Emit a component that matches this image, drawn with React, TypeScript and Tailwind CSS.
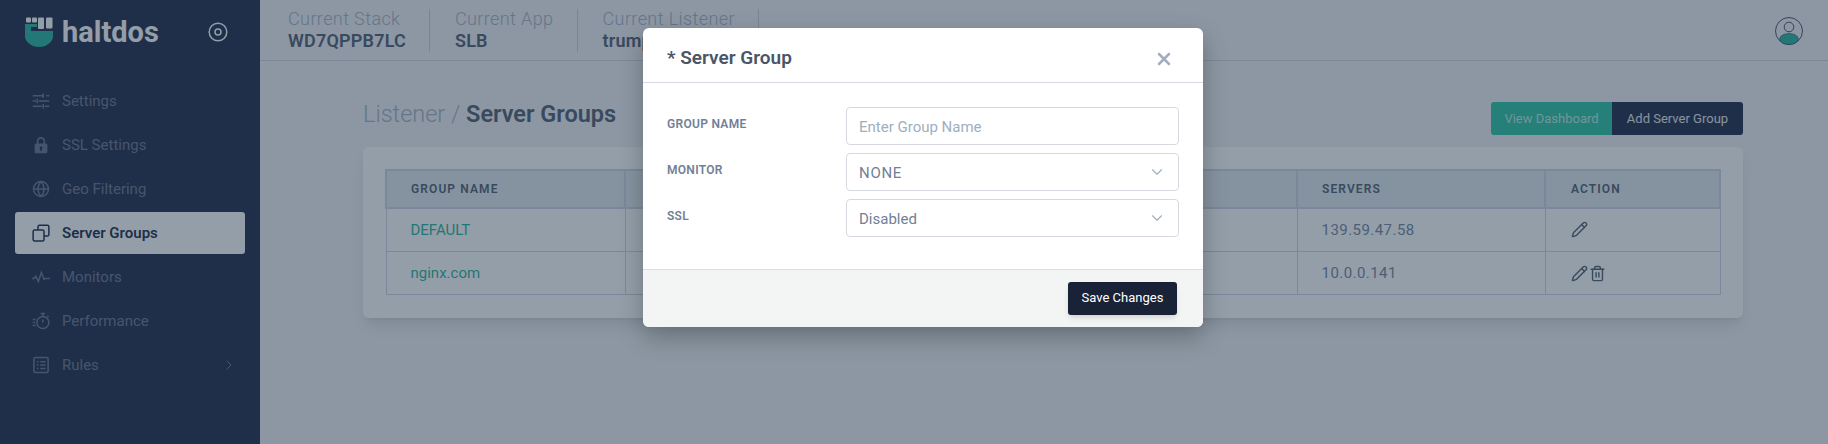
import { ChevronDown, ChevronRight, Globe, Pencil, Trash2, X } from "lucide-react";

type IconProps = { className?: string };

function SettingsIcon({ className }: IconProps) {
  return (
    <svg viewBox="0 0 24 24" className={className} fill="none" stroke="currentColor" strokeWidth="2">
      <path d="M1 5h14M19 5h4M15 2v6M1 12h4M9 12h14M7 9v6M1 19h12M17 19h6M15 16v6" />
    </svg>
  );
}

function LockIcon({ className }: IconProps) {
  return (
    <svg viewBox="0 0 24 24" className={className}>
      <path d="M7.500 11V7a4.500 4.500 0 0 1 9 0v4" fill="none" stroke="currentColor" strokeWidth="2.200" />
      <path
        fillRule="evenodd"
        fill="currentColor"
        d="M5.500 10h13a2 2 0 0 1 2 2v9a2 2 0 0 1-2 2h-13a2 2 0 0 1-2-2v-9a2 2 0 0 1 2-2zM12 14a2 2 0 0 0-1 3.700V20h2v-2.300A2 2 0 0 0 12 14z"
      />
    </svg>
  );
}

function GroupsIcon({ className }: IconProps) {
  return (
    <svg viewBox="0 0 24 24" className={className} fill="none" stroke="currentColor" strokeWidth="2">
      <rect x="1.500" y="8" width="14.500" height="14.500" rx="2" />
      <path d="M8 8V3.500a2 2 0 0 1 2-2h10.500a2 2 0 0 1 2 2V14a2 2 0 0 1-2 2H16" />
    </svg>
  );
}

function MonitorsIcon({ className }: IconProps) {
  return (
    <svg viewBox="0 0 24 24" className={className} fill="none" stroke="currentColor" strokeWidth="2">
      <path d="M0 14h3l2-3 3.500 7 4-12 3.500 9 2-1h6" />
    </svg>
  );
}

function PerformanceIcon({ className }: IconProps) {
  return (
    <svg viewBox="0 0 24 24" className={className} fill="none" stroke="currentColor" strokeWidth="2">
      <circle cx="14.500" cy="14" r="8" />
      <path d="M11.500 2h6M14.500 2v4M14.500 10v4M20.500 5l1.500 1.500M1 10h4M1 14h3M1 18h4" />
    </svg>
  );
}

function RulesIcon({ className }: IconProps) {
  return (
    <svg viewBox="0 0 24 24" className={className} fill="none" stroke="currentColor" strokeWidth="2">
      <rect x="2.500" y="2" width="19" height="20" rx="2" />
      <path d="M6.500 7.500h2M11 7.500h7M6.500 12h2M11 12h7M6.500 16.500h2M11 16.500h7" />
    </svg>
  );
}

const navItems = [
  { label: "Settings", icon: SettingsIcon },
  { label: "SSL Settings", icon: LockIcon },
  { label: "Geo Filtering", icon: Globe },
  { label: "Server Groups", icon: GroupsIcon, active: true },
  { label: "Monitors", icon: MonitorsIcon },
  { label: "Performance", icon: PerformanceIcon },
  { label: "Rules", icon: RulesIcon, more: true },
];

function Logo() {
  return (
    <svg viewBox="0 0 28 30" className="w-[28px] h-[30px] shrink-0">
      <rect x="1" y="0.500" width="5" height="5" rx="1" fill="#fff" />
      <rect x="7" y="0.500" width="5" height="5" rx="1" fill="#fff" />
      <rect x="13" y="0.500" width="6" height="11.500" rx="1" fill="#fff" />
      <rect x="21" y="0.500" width="6.500" height="11" rx="1" fill="#fff" />
      <path d="M0 7h12v3H6v4h22v5c0 6-6.500 11-14 11S0 25 0 19z" fill="#1fb39a" />
    </svg>
  );
}

function Avatar() {
  return (
    <svg viewBox="0 0 28 28" className="w-[28px] h-[28px]" fill="none">
      <circle cx="14" cy="14" r="13.500" stroke="#17203f" strokeWidth="0.800" />
      <circle cx="14" cy="10" r="4.800" stroke="#17203f" strokeWidth="0.800" />
      <ellipse cx="14" cy="22" rx="9.300" ry="5.500" fill="#1fb29b" stroke="#17203f" strokeWidth="0.500" />
    </svg>
  );
}

function Sidebar() {
  return (
    <aside className="w-[260px] shrink-0 bg-[#17203f] pt-[17px]">
      <div className="flex items-center pl-[25px] h-[30px]">
        <Logo />
        <span className="ml-[9px] w-[115px] text-[29px] font-bold text-white leading-none">haltdos</span>
        <svg viewBox="0 0 20 20" className="w-[20px] h-[20px] ml-[31px]" fill="none" stroke="#fff" strokeWidth="1.500">
          <circle cx="10" cy="10" r="8.800" />
          <circle cx="10" cy="10" r="3" />
        </svg>
      </div>
      <nav className="mt-[33px] px-[15px] flex flex-col gap-[2px]">
        {navItems.map((item) => {
          const Icon = item.icon;
          return (
            <a
              key={item.label}
              className={
                item.active
                  ? "h-[42px] flex items-center pl-[17px] pr-[8px] rounded-[3px] bg-white text-[#17203f] font-semibold text-[15px]"
                  : "h-[42px] flex items-center pl-[17px] pr-[8px] text-[#656d88] text-[15px]"
              }
            >
              <Icon className="w-[18px] h-[18px] mr-[12px]" />
              <span>{item.label}</span>
              {item.more && <ChevronRight className="w-[16px] h-[16px] ml-auto" strokeWidth={1.500} />}
            </a>
          );
        })}
      </nav>
    </aside>
  );
}

function HeaderStat({ label, value }: { label: string; value: string }) {
  return (
    <div className="h-[43px] pl-[25px] pr-[23px] border-r border-[#c7ced9] first:pl-[28px] flex flex-col justify-between">
      <div className="text-[18px] leading-[20px] font-light tracking-[0.4px] text-[#a0aec0]">{label}</div>
      <div className="text-[18px] leading-[22px] font-semibold tracking-[0.2px] text-[#4a5568]">{value}</div>
    </div>
  );
}

function ServerGroupModal() {
  return (
    <div className="absolute inset-0 bg-[#273e54]/50">
      <div className="absolute left-[643px] top-[28px] w-[560px] bg-white rounded-[6px] shadow-[0_10px_25px_rgba(0,0,0,0.25)] overflow-hidden">
        <div className="h-[55px] border-b border-[#d6d9e2] flex items-center justify-between pl-[24px] pr-[29px]">
          <h3 className="text-[19px] font-semibold text-[#4a5568] mt-[7px]">* Server Group</h3>
          <X className="w-[20px] h-[20px] text-[#a0aec0] mt-[7px]" strokeWidth={3} />
        </div>
        <div className="h-[186px] pl-[24px] pr-[24px] pt-[24px] flex flex-col gap-[8px]">
          <div className="flex items-start">
            <label className="w-[179px] text-[12px] font-semibold text-[#718096] tracking-[0.3px] mt-[8px]">GROUP NAME</label>
            <input
              placeholder="Enter Group Name"
              className="w-[333px] h-[38px] rounded-[4px] border border-[#d5d9df] px-[12px] pt-[2px] text-[15px] placeholder:text-[#a0aec0] outline-none"
            />
          </div>
          <div className="flex items-start">
            <label className="w-[179px] text-[12px] font-semibold text-[#718096] tracking-[0.3px] mt-[8px]">MONITOR</label>
            <div className="w-[333px] h-[38px] rounded-[4px] border border-[#d5d9df] pl-[12px] pr-[12px] flex items-center justify-between text-[15px] text-[#718096]">
              <span className="pt-[2px] tracking-[0.7px]">NONE</span>
              <ChevronDown className="w-[18px] h-[18px] text-[#a0aec0]" strokeWidth={1.500} />
            </div>
          </div>
          <div className="flex items-start">
            <label className="w-[179px] text-[12px] font-semibold text-[#718096] tracking-[0.3px] mt-[8px]">SSL</label>
            <div className="w-[333px] h-[38px] rounded-[4px] border border-[#d5d9df] pl-[12px] pr-[12px] flex items-center justify-between text-[15px] text-[#718096]">
              <span className="pt-[2px]">Disabled</span>
              <ChevronDown className="w-[18px] h-[18px] text-[#a0aec0]" strokeWidth={1.500} />
            </div>
          </div>
        </div>
        <div className="h-[58px] bg-[#f3f5f5] border-t border-[#dcdfe3] flex items-center justify-end pr-[26px]">
          <button className="h-[33px] w-[109px] pb-[2px] rounded-[3px] bg-[#1a2238] text-white text-[13px] shadow-md">Save Changes</button>
        </div>
      </div>
    </div>
  );
}

export default function App() {
  return (
    <div className="relative w-[1828px] h-[444px] overflow-hidden flex bg-[#f1f0f2] font-['Roboto',sans-serif]">
      <Sidebar />
      <div className="flex-1 flex flex-col">
        <header className="h-[61px] border-b border-[#cfd5df] flex items-start pt-[9px] pr-[25px]">
          <HeaderStat label="Current Stack" value="WD7QPPB7LC" />
          <HeaderStat label="Current App" value="SLB" />
          <HeaderStat label="Current Listener" value="trump.com" />
          <div className="ml-auto mt-[8px]">
            <Avatar />
          </div>
        </header>

        <main className="pl-[103px] pr-[85px]">
          <div className="flex items-center justify-between mt-[41px] h-[33px]">
            <h2 className="text-[23.500px] font-light text-[#a0aec0] mb-[7px]">
              Listener / <span className="font-semibold text-[#4a5568]">Server Groups</span>
            </h2>
            <div className="flex">
              <button className="h-[33px] w-[121px] rounded-l-[3px] bg-[#21c29c] text-white/70 text-[13px]">View Dashboard</button>
              <button className="h-[33px] w-[131px] rounded-r-[3px] bg-[#17203f] text-white/90 text-[13px]">Add Server Group</button>
            </div>
          </div>

          <div className="mt-[12px] bg-white rounded-[6px] shadow-lg px-[22px] pt-[22px] pb-[23px]">
            <table className="w-full table-fixed border-collapse text-[15px] text-[#718096]">
              <colgroup>
                <col className="w-[239px]" />
                <col />
                <col className="w-[248px]" />
                <col className="w-[175px]" />
              </colgroup>
              <thead>
                <tr className="h-[38px] bg-[#e3e8ec] text-left text-[12px] tracking-[1.100px] text-[#4a5568]">
                  <th className="border-2 border-[#cdd2de] pl-[24px] font-semibold">GROUP NAME</th>
                  <th className="border-2 border-[#cdd2de]"></th>
                  <th className="border-2 border-[#cdd2de] pl-[24px] font-semibold">SERVERS</th>
                  <th className="border-2 border-[#cdd2de] pl-[25px] font-semibold">ACTION</th>
                </tr>
              </thead>
              <tbody>
                <tr className="h-[43px]">
                  <td className="border border-[#cdd2de] pl-[24px] text-[#1fae92]">DEFAULT</td>
                  <td className="border border-[#cdd2de]"></td>
                  <td className="border border-[#cdd2de] pl-[24px] tracking-[0.45px]">139.59.47.58</td>
                  <td className="border border-[#cdd2de] pl-[25px] text-[#4a5568]">
                    <Pencil className="w-[17px] h-[17px]" strokeWidth={2} />
                  </td>
                </tr>
                <tr className="h-[43px]">
                  <td className="border border-[#cdd2de] pl-[24px] pt-[2px] text-[#1fae92]">nginx.com</td>
                  <td className="border border-[#cdd2de]"></td>
                  <td className="border border-[#cdd2de] pl-[24px] pt-[2px] tracking-[0.45px]">10.0.0.141</td>
                  <td className="border border-[#cdd2de] pl-[25px] pt-[2px] text-[#4a5568]">
                    <div className="flex gap-[1px]">
                      <Pencil className="w-[17px] h-[17px]" strokeWidth={2} />
                      <Trash2 className="w-[17px] h-[17px]" strokeWidth={2} />
                    </div>
                  </td>
                </tr>
              </tbody>
            </table>
          </div>
        </main>
      </div>
      <ServerGroupModal />
    </div>
  );
}
